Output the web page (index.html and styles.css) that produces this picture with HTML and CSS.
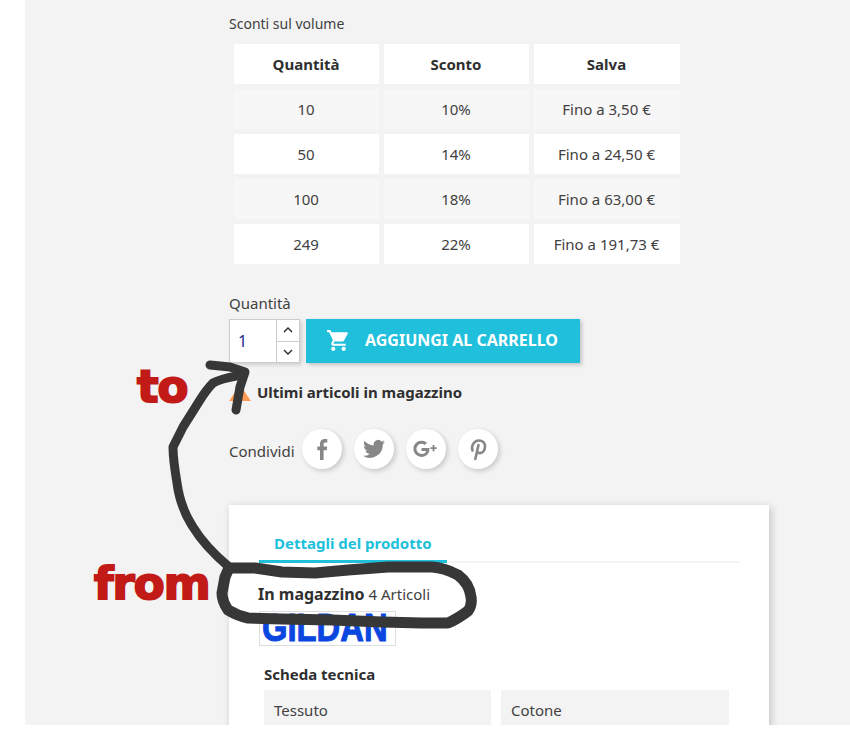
FILE: index.html
```html
<!DOCTYPE html>
<html lang="en">
<head>
    <meta charset="UTF-8">
    <title>Prodotto</title>
    <link rel="stylesheet" href="styles.css">
</head>
<body>
    <div class="page">
        <div class="product">
            <p class="volume__title">Sconti sul volume</p>
            <table class="volume">
                <tr><th>Quantità</th><th>Sconto</th><th>Salva</th></tr>
                <tr><td>10</td><td>10%</td><td>Fino a 3,50 €</td></tr>
                <tr><td>50</td><td>14%</td><td>Fino a 24,50 €</td></tr>
                <tr><td>100</td><td>18%</td><td>Fino a 63,00 €</td></tr>
                <tr><td>249</td><td>22%</td><td>Fino a 191,73 €</td></tr>
            </table>

            <p class="qty__label">Quantità</p>
            <div class="qty">
                <div class="qty__box">
                    <span class="qty__value">1</span>
                    <div class="qty__arrows">
                        <span class="qty__arrow">
                            <svg width="10" height="6" viewBox="0 0 10 6"><path d="M1 5l4-4 4 4" fill="none" stroke="#222" stroke-width="1.3"/></svg>
                        </span>
                        <span class="qty__arrow">
                            <svg width="10" height="6" viewBox="0 0 10 6"><path d="M1 1l4 4 4-4" fill="none" stroke="#222" stroke-width="1.3"/></svg>
                        </span>
                    </div>
                </div>
                <button class="btn">
                    <svg class="btn__icon" width="25" height="25" viewBox="0 0 24 24"><path fill="#fff" d="M7 18c-1.1 0-2 .9-2 2s.9 2 2 2 2-.9 2-2-.9-2-2-2zM1 2v2h2l3.6 7.59-1.35 2.45c-.16.28-.25.61-.25.96 0 1.1.9 2 2 2h12v-2H7.42c-.14 0-.25-.11-.25-.25l.03-.12.9-1.63h7.45c.75 0 1.41-.41 1.75-1.03l3.58-6.49A1 1 0 0 0 20 4H5.21l-.94-2H1zm16 16c-1.1 0-2 .9-2 2s.9 2 2 2 2-.9 2-2-.9-2-2-2z"/></svg>
                    Aggiungi al carrello
                </button>
            </div>

            <div class="stock">
                <svg class="stock__icon" width="22" height="16" viewBox="0 0 22 16"><path fill="#ff9a52" d="M11 0l11 16H0z"/></svg>
                <span>Ultimi articoli in magazzino</span>
            </div>

            <div class="share">
                <span class="share__label">Condividi</span>
                <span class="share__btn">
                    <svg width="24" height="24" viewBox="0 0 24 24"><path fill="#878787" d="M13.6 23V13.2h3.1l.5-3.700h-3.600V7.200c0-1.100.3-1.800 1.800-1.800h1.900V2.100C17 2 15.900 1.900 14.700 1.900c-2.800 0-4.700 1.700-4.700 4.800v2.800H7.300v3.700H10V23z"/></svg>
                </span>
                <span class="share__btn">
                    <svg width="24" height="24" viewBox="0 0 24 24"><path fill="#878787" d="M23 5.100c-.8.400-1.700.6-2.600.7.900-.6 1.600-1.400 2-2.500-.9.500-1.800.9-2.900 1.100A4.500 4.500 0 0 0 11.800 8.500C8 8.300 4.700 6.500 2.500 3.700c-1.200 2.100-.6 4.700 1.400 6-.7 0-1.400-.2-2-.6 0 2.200 1.500 4.100 3.600 4.600-.7.200-1.400.2-2 .1.600 1.800 2.200 3.100 4.200 3.100A9 9 0 0 1 1 18.800a12.800 12.800 0 0 0 19.700-11.400c.9-.6 1.700-1.400 2.300-2.300z"/></svg>
                </span>
                <span class="share__btn">
                    <svg width="26" height="24" viewBox="0 0 26 24"><path fill="#878787" d="M8.500 11v2.900h4.700c-.4 1.900-2.100 3-4.700 3a5.100 5.100 0 0 1 0-10.200c1.300 0 2.400.4 3.300 1.200l2.200-2.200A8.100 8.100 0 0 0 8.500 3.700a8.100 8.100 0 1 0 0 16.200c4.700 0 7.900-3.300 7.900-7.900 0-.4 0-.7-.1-1zM21.500 10.200V8h-1.900v2.200h-2.200v1.900h2.200v2.200h1.900v-2.200h2.200v-1.900z"/></svg>
                </span>
                <span class="share__btn">
                    <svg width="24" height="24" viewBox="0 0 24 24"><path fill="none" stroke="#878787" stroke-width="2.600" stroke-linecap="round" stroke-linejoin="round" d="M6.500 13.500C4.800 9 8 3.500 12.800 3.500c4 0 6.200 2.700 6.200 6 0 3.800-2.300 6.600-5 6.600-1.500 0-2.500-.8-2.800-1.800M12.500 8l-3.200 14"/></svg>
                </span>
            </div>

            <div class="card">
                <div class="tabs">
                    <span class="tabs__item">Dettagli del prodotto</span>
                </div>
                <p class="instock"><strong>In magazzino</strong> 4 Articoli</p>
                <div class="brand"><span class="brand__name">GILDAN</span></div>
                <p class="specs__title">Scheda tecnica</p>
                <div class="specs">
                    <span class="specs__cell">Tessuto</span>
                    <span class="specs__cell specs__cell--wide">Cotone</span>
                </div>
            </div>
        </div>

        <!-- hand drawn notes on top of the screenshot -->
        <span class="note note--to">to</span>
        <span class="note note--from">from</span>
        <svg class="scribble" width="850" height="737" viewBox="0 0 850 737">
            <g fill="none" stroke="#373737" stroke-linecap="round" stroke-linejoin="round">
                <path stroke-width="9" d="M229 567C215 555 202 542 193 527C187 517 186 516 183 507C179 497 178 490 177 483C174 465 173 455 173 447L183 427L200 400C205 392 208 388 213 383C222 378 232 377 243 375"/>
                <path stroke-width="9" d="M210 365L230 367L245 372L240 387L236 410"/>
                <path stroke-width="11" d="M225 577L229 568L255 568L282 572L315 573L348 570L388 567L432 567C445 568 452 572 458 575C466 581 470 588 471 597C472 603 471 607 468 611C460 617 455 620 448 623L422 623L382 622L332 620L282 619L248 618C238 616 233 613 228 610C224 604 222 598 222 593z"/>
            </g>
        </svg>
    </div>
</body>
</html>
```

FILE: styles.css
```css
:root {
	--bg: #f3f3f3;
	--text: #414141;
	--dark: #2f2f2f;
	--cyan: #20c0dc;
	--red: #c21a17;
}

* {
	box-sizing: border-box;
}

body {
	background-color: #fff;
	color: var(--text);
	font-family: "Noto Sans", "Open Sans", sans-serif;
	font-size: 15px;
	height: 737px;
	margin: 0;
	overflow: hidden;
}

p {
	margin: 0;
}

.page {
	background-color: var(--bg);
	height: 725px;
	margin-left: 25px;
	overflow: hidden;
	position: relative;
}

.product {
	padding: 14px 0 0 204px;
	width: 744px;
}

.volume__title {
	font-size: 14px;
	line-height: 20px;
}

.volume {
	border-collapse: separate;
	border-spacing: 5px;
	margin: 5px 0 0 0;
	table-layout: fixed;
	width: 456px;
}

.volume th,
.volume td {
	background-color: #fff;
	height: 40px;
	padding: 0 1px 0 0;
	text-align: center;
}

.volume th {
	color: var(--dark);
	font-weight: 700;
	width: 145px;
}

.volume th:last-child {
	width: 146px;
}

.volume tr:nth-child(even) td {
	background-color: #f7f7f7;
}

.qty__label {
	line-height: 20px;
	margin-top: 24px;
}

.qty {
	display: flex;
	gap: 6px;
	margin-top: 6px;
}

.qty__box {
	background-color: #fff;
	border: 1px solid #ccc;
	box-shadow: 2px 2px 4px rgba(0, 0, 0, 0.15);
	display: flex;
	height: 44px;
	width: 71px;
}

.qty__value {
	color: #232b8a;
	flex: 1;
	font-size: 16px;
	line-height: 42px;
	padding-left: 8px;
}

.qty__arrows {
	border-left: 1px solid #ccc;
	display: flex;
	flex-direction: column;
	width: 23px;
}

.qty__arrow {
	align-items: center;
	display: flex;
	flex: 1;
	justify-content: center;
}

.qty__arrow + .qty__arrow {
	border-top: 1px solid #ccc;
}

.btn {
	align-items: center;
	background-color: var(--cyan);
	border: none;
	box-shadow: 2px 2px 4px rgba(0, 0, 0, 0.2);
	color: #fff;
	display: flex;
	font-family: inherit;
	font-size: 16px;
	font-weight: 700;
	height: 44px;
	padding: 0 21px 2px 20px;
	text-transform: uppercase;
	width: 274px;
}

.btn__icon {
	margin-right: 14px;
}

.stock {
	align-items: center;
	color: var(--dark);
	display: flex;
	font-weight: 700;
	gap: 6px;
	margin-top: 19px;
}

.stock span {
	padding-bottom: 1px;
}

.share {
	align-items: center;
	display: flex;
	gap: 12px;
	margin-top: 26px;
}

.share__label {
	margin-right: -5px;
	padding-top: 3px;
}

.share__btn {
	align-items: center;
	background-color: #fff;
	border-radius: 50%;
	box-shadow: 2px 2px 5px rgba(0, 0, 0, 0.18);
	display: flex;
	height: 40px;
	justify-content: center;
	width: 40px;
}

.card {
	background-color: #fff;
	box-shadow: 2px 2px 8px rgba(0, 0, 0, 0.2);
	height: 260px;
	margin-top: 36px;
	padding: 20px 29px 0 30px;
	width: 540px;
}

.tabs {
	border-bottom: 2px solid #f5f5f5;
	height: 38px;
}

.tabs__item {
	border-bottom: 3px solid var(--cyan);
	color: var(--cyan);
	display: inline-block;
	font-weight: 700;
	height: 38px;
	line-height: 36px;
	padding: 0 15px;
}

.instock {
	line-height: 20px;
	margin-left: -1px;
	margin-top: 21px;
}

.instock strong {
	color: var(--dark);
	font-size: 16px;
}

.brand {
	border: 1px solid #ddd;
	height: 35px;
	margin-top: 7px;
	padding-left: 2px;
	width: 137px;
}

.brand__name {
	color: #0a47e0;
	display: block;
	font-family: "Liberation Sans", sans-serif;
	font-size: 39px;
	font-weight: 700;
	line-height: 31px;
	transform: scaleX(0.84);
	transform-origin: left;
	-webkit-text-stroke: 1px #0a47e0;
}

.specs__title {
	color: var(--dark);
	font-weight: 700;
	line-height: 20px;
	margin: 18px 0 0 5px;
}

.specs {
	display: flex;
	gap: 10px;
	margin: 6px 0 0 5px;
}

.specs__cell {
	background-color: #f3f3f3;
	height: 50px;
	line-height: 40px;
	padding-left: 10px;
	width: 227px;
}

.specs__cell--wide {
	width: 228px;
}

.note {
	color: var(--red);
	font-family: "DejaVu Sans", sans-serif;
	font-weight: 700;
	letter-spacing: -1px;
	position: absolute;
	-webkit-text-stroke: 2px var(--red);
}

.note--to {
	font-size: 45px;
	left: 112px;
	line-height: 50px;
	top: 362px;
}

.note--from {
	font-size: 45px;
	left: 69px;
	line-height: 50px;
	top: 559px;
}

.scribble {
	left: -25px;
	pointer-events: none;
	position: absolute;
	top: 0;
}
```
